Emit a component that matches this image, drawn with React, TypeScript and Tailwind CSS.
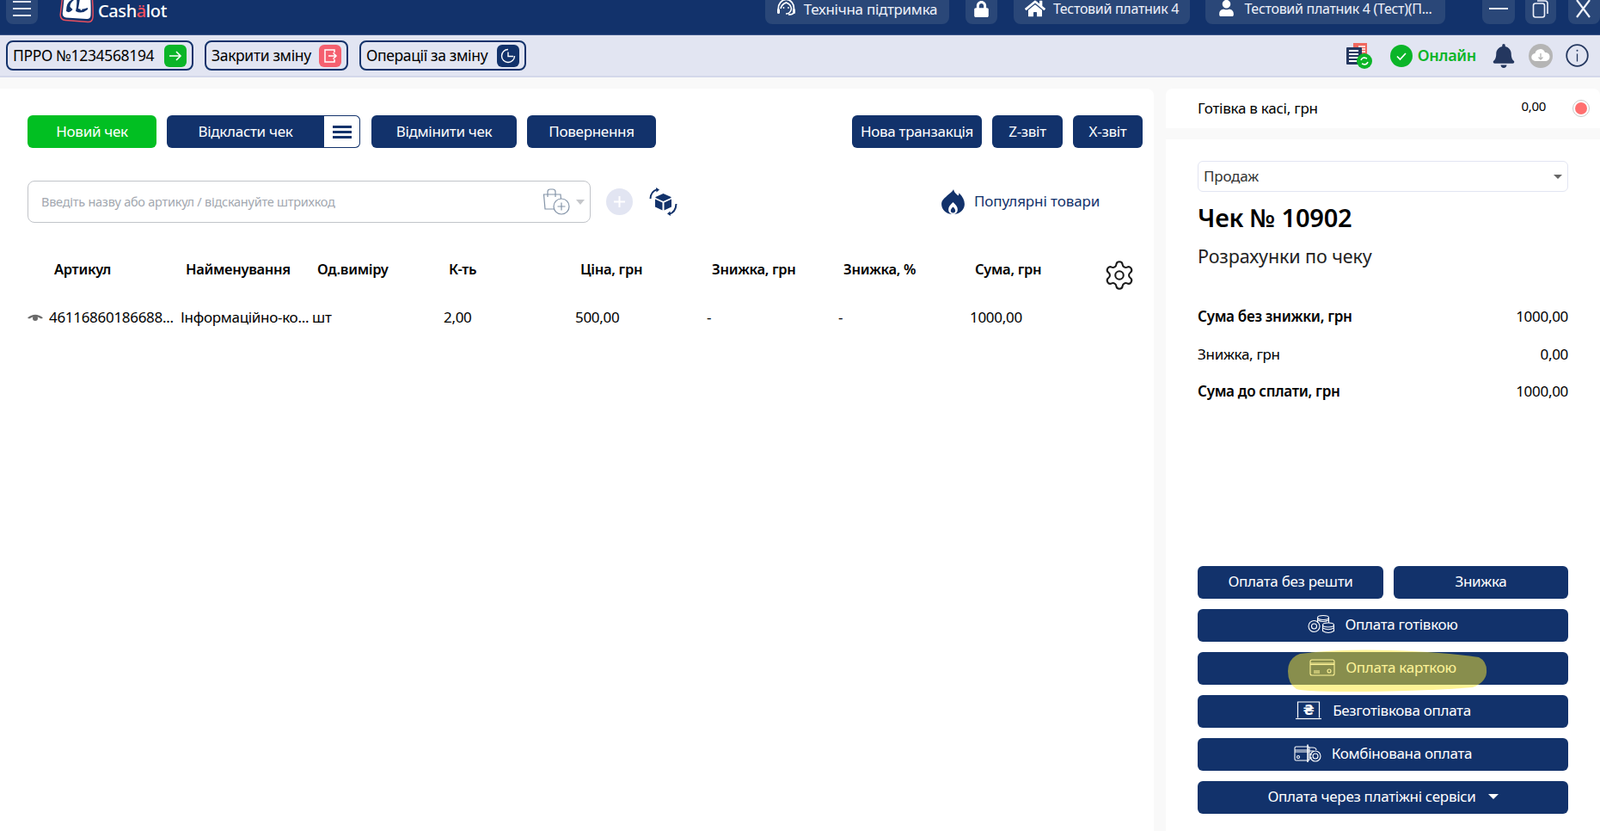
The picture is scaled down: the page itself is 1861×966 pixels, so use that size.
import React from "react";
import { FaBell, FaHome, FaLock, FaUser } from "react-icons/fa";
import { Settings } from "lucide-react";

const Logo = () => (
  <svg width="42" height="28" viewBox="0 0 42 28" className="shrink-0">
    <path d="M4 -6 L38 -6 Q39.500 10 39 20 Q38.500 26 33 25.500 L7 23.500 Q1 23 1.200 17 Z" fill="#12326b" stroke="#e8505f" strokeWidth="1.500" />
    <path d="M6 -6 L36 -6 Q37 8 36.500 18 Q36 22.500 31.500 22 L8 20.500 Q3.500 20 3.800 15.500 Z" fill="#fff" />
    <path d="M8 13 Q8 3 14 0 L17 0 Q12 4 12.500 8 L15.500 11 Q12 16 8 13Z" fill="#12326b" />
    <path d="M20 -2 L24 -2 Q23 5 22 10 Q26 12 33 9 L33 11 Q26 17 19 13 Q21 5 20 -2Z" fill="#12326b" />
    <circle cx="25.500" cy="11" r="1" fill="#fff" />
  </svg>
);

const Support = () => (
  <svg width="24" height="24" viewBox="0 0 24 24" fill="none" stroke="#fff" strokeWidth="1.700" className="shrink-0">
    <path d="M3.500 15 C2 6 8 1.500 12.500 1.500 C17 1.500 23 6 21 15" />
    <path d="M6 12 C7 7 10 6 12.500 5 C15 6 18 8 18.500 12 C18 16 15 18 12 18" />
    <rect x="2" y="12" width="3" height="6" rx="1.500" fill="#fff" stroke="none" />
    <rect x="20" y="12" width="3" height="6" rx="1.500" fill="#fff" stroke="none" />
    <path d="M21 17 Q20 19 15 19" />
    <circle cx="9.500" cy="11" r="0.900" fill="#fff" stroke="none" />
    <circle cx="15" cy="11" r="0.900" fill="#fff" stroke="none" />
  </svg>
);

const Chip = ({ className, children }: { className: string; children?: React.ReactNode }) => (
  <div className={`h-7 rounded-b-lg bg-[#2a4778] flex items-center justify-center shrink-0 overflow-hidden ${className}`}>{children}</div>
);

const ToolButton = ({ label, tile, children, className }: { label: string; tile: string; children: React.ReactNode; className: string }) => (
  <div className={`h-[35px] rounded-lg border-2 border-[#12326b] flex items-center justify-between pl-[6px] pr-[6px] shrink-0 ${className}`}>
    <span className="text-[17.5px] leading-none text-black whitespace-nowrap tracking-[-0.35px] mt-[1px]">{label}</span>
    <span className={`w-[26px] h-[26px] rounded-md flex items-center justify-center ${tile}`}>{children}</span>
  </div>
);

const ActionButton = ({ className, children }: { className: string; children: React.ReactNode }) => (
  <div className={`h-[38px] rounded-md text-white text-[17px] tracking-[-0.3px] flex items-center justify-center whitespace-nowrap shrink-0 ${className}`}>
    {children}
  </div>
);

const cols = ["Артикул", "Найменування", "Од.виміру", "К-ть", "Ціна, грн", "Знижка, грн", "Знижка, %", "Сума, грн"];
const vals = ["46116860186688...", "Інформаційно-ко...", "шт", "2,00", "500,00", "-", "-", "1000,00"];

const Coins = () => (
  <svg width="32" height="24" viewBox="0 0 32 24" fill="none" stroke="#fff" strokeWidth="1.100">
    <circle cx="7.500" cy="14" r="6.500" /><circle cx="7.500" cy="14" r="3" />
    <ellipse cx="18" cy="4" rx="6.500" ry="2.500" /><path d="M11.500 4v6M24.500 4v6M12 7q6 3 12 0" />
    <ellipse cx="24" cy="12.500" rx="6.500" ry="2.500" /><path d="M17.500 12.500v7q6.500 4 13 0v-7M17.500 16q6.500 3.500 13 0" />
  </svg>
);
const CardIcon = () => (
  <svg width="30" height="20" viewBox="0 0 30 20" fill="none" stroke="#fff" strokeWidth="1.100">
    <rect x="1" y="1" width="28" height="18" rx="2" /><path d="M1 6.500h28" /><path d="M1 5h28" />
    <path d="M5 14h7M5 16h7" /><circle cx="23" cy="14" r="2" />
  </svg>
);
const Laptop = () => (
  <svg width="32" height="22" viewBox="0 0 32 22" fill="none" stroke="#fff" strokeWidth="1.200">
    <path d="M3.500 19.500 V1 H28.500 V19.500" /><path d="M1 20.500H31" />
    <text x="16" y="16" textAnchor="middle" fontSize="15" fontWeight="700" fill="#fff" stroke="none" fontFamily="'DejaVu Sans', sans-serif">₴</text>
  </svg>
);
const Combo = () => (
  <svg width="32" height="22" viewBox="0 0 32 22" fill="none" stroke="#fff" strokeWidth="1.100">
    <rect x="1" y="3" width="17" height="16" rx="1.500" /><path d="M1 7h17M1 9h17" /><circle cx="5" cy="15" r="1.500" />
    <path d="M16 0.500V21" strokeWidth="1.600" />
    <path d="M18 4h4q4 0 4 3M18 8h5M18 12h3M18 16h3" /><circle cx="25" cy="14" r="6" /><circle cx="25" cy="14" r="3" />
  </svg>
);

export default function App() {
  return (
    <div className="w-[1861px] h-[966px] overflow-hidden relative flex flex-col bg-[#f9f9f9] font-['Noto_Sans',sans-serif] text-black">
      {/* top bar */}
      <header className="h-[41px] bg-[#12326b] border-b border-[#3a5488] flex items-start pl-[7px] shrink-0 overflow-hidden">
        <Chip className="w-[37px] flex-col gap-[6px] justify-start pt-[1px]">
          <span className="w-[21px] h-[2px] bg-[#dfe3ee] block" />
          <span className="w-[21px] h-[2px] bg-[#dfe3ee] block" />
          <span className="w-[21px] h-[2px] bg-[#dfe3ee] block" />
        </Chip>
        <div className="ml-[25px]"><Logo /></div>
        <div className="ml-[3px] text-[20px] leading-[25px] font-medium text-white font-['Inter',sans-serif] tracking-[-0.4px]">
          Cash<span className="text-[#f0505f]">ä</span>lot
        </div>
        <div className="ml-auto flex">
          <Chip className="w-[214px] gap-[9px] pb-[8px] pr-[2px]">
            <Support />
            <span className="text-[17px] leading-none text-[#eef1fa] tracking-[-0.27px] whitespace-nowrap">Технічна підтримка</span>
          </Chip>
          <Chip className="w-[37px] ml-[19px] pb-[8px]"><FaLock className="text-white text-[19px]" /></Chip>
          <Chip className="w-[205px] ml-[19px] gap-[9px] pb-[9px]">
            <FaHome className="text-white text-[24px]" />
            <span className="text-[16px] leading-none text-[#eef1fa] tracking-[-0.3px] whitespace-nowrap">Тестовий платник 4</span>
          </Chip>
          <Chip className="w-[279px] ml-[18px] gap-[11px] pb-[9px]">
            <FaUser className="text-white text-[19px]" />
            <span className="text-[16px] leading-none text-[#eef1fa] tracking-[-0.3px] whitespace-nowrap">Тестовий платник 4 (Тест)(П...</span>
          </Chip>
          <Chip className="w-[38px] ml-[43px] pb-[9px]"><span className="w-[22px] h-[2px] bg-[#eef1fa] block" /></Chip>
          <Chip className="w-[36px] ml-[12px] pb-[8px]">
            <svg width="20" height="24" viewBox="0 0 20 24" fill="none" stroke="#eef1fa" strokeWidth="1.600">
              <rect x="1.500" y="6" width="13" height="16" rx="2.500" />
              <path d="M6 3h9q3 0 3 3v12" />
            </svg>
          </Chip>
          <Chip className="w-[37px] ml-[14px] justify-start pl-[6px] pb-[8px]">
            <svg width="24" height="24" viewBox="0 0 24 24" stroke="#eef1fa" strokeWidth="2.200"><path d="M4 2l15 20M19 2L4 22" /></svg>
          </Chip>
        </div>
      </header>

      {/* toolbar */}
      <div className="h-[49px] bg-[#e2e5f2] border-b-2 border-[#d3d8ea] flex items-center pl-[7px] pr-[13px] shrink-0">
        <ToolButton label="ПРРО №1234568194" tile="bg-[#0bb528]" className="w-[218px]">
          <svg width="18" height="18" viewBox="0 0 18 18" fill="none" stroke="#fff" strokeWidth="1.600"><path d="M2 9h13M10 4l5 5-5 5" /></svg>
        </ToolButton>
        <ToolButton label="Закрити зміну" tile="bg-[#f5606f]" className="w-[167px] ml-[13px]">
          <svg width="20" height="20" viewBox="0 0 20 20" fill="none" stroke="#fff" strokeWidth="1.500"><path d="M15 6V3H4v14h11v-3M8 10h9M13.500 6.500L17 10l-3.500 3.500" /></svg>
        </ToolButton>
        <ToolButton label="Операції за зміну" tile="bg-[#12326b]" className="w-[194px] ml-[13px]">
          <svg width="20" height="20" viewBox="0 0 20 20" fill="none" stroke="#fff" strokeWidth="1.400"><path d="M10 2.500a7.500 7.500 0 1 0 7.500 7.500M10 5.500V10.500H16" /></svg>
        </ToolButton>
        <div className="ml-auto flex items-center">
          <svg width="32" height="30" viewBox="0 0 32 30">
            <rect x="9" y="0" width="16" height="16" fill="#f0685f" />
            <path d="M15 4h8M15 7h8M15 10h8" stroke="#fff" strokeWidth="1.500" />
            <rect x="1" y="5" width="18" height="20" rx="1" fill="#24375f" />
            <path d="M4 9h11M4 13h11M4 17h11M4 21h11" stroke="#fff" strokeWidth="2" />
            <circle cx="22" cy="21" r="9" fill="#0bb528" />
            <path d="M18 20q1-3 4-3l3 1M26 22q-1 3-4 3l-3-1" stroke="#fff" strokeWidth="1.500" fill="none" />
          </svg>
          <svg width="26" height="26" viewBox="0 0 26 26" className="ml-[20px]">
            <circle cx="13" cy="13" r="13" fill="#0bb528" />
            <path d="M8 13.500l3.500 3.500 6.500-7" stroke="#fff" strokeWidth="1.700" fill="none" />
          </svg>
          <span className="ml-[6px] -mt-[2px] text-[18px] font-semibold text-[#0bb528] leading-none tracking-[-0.3px]">Онлайн</span>
          <FaBell className="ml-[18px] text-[#24375f] text-[28px]" />
          <svg width="28" height="28" viewBox="0 0 28 28" className="ml-[15px]">
            <circle cx="14" cy="14" r="14" fill="#b5b5b5" />
            <path d="M8 20a4.500 4.500 0 0 1-.500-9 6 6 0 0 1 11.500-1 5 5 0 0 1 1 10Z" fill="#fff" />
            <path d="M14 11v7M11.500 15.500L14 18l2.500-2.500" stroke="#b5b5b5" strokeWidth="1.300" fill="none" />
          </svg>
          <svg width="27" height="27" viewBox="0 0 27 27" fill="none" className="ml-[15px]">
            <circle cx="13.500" cy="13.500" r="12.300" stroke="#24375f" strokeWidth="1.800" />
            <path d="M13.500 11.500v9" stroke="#24375f" strokeWidth="1.300" />
            <circle cx="13.500" cy="7.800" r="1" fill="#24375f" />
          </svg>
        </div>
      </div>

      {/* body */}
      <div className="flex-1 flex pt-[13px] min-h-0">
        <main className="w-[1342px] bg-white rounded-tr-lg pt-[31px] pl-[32px] pr-[13px] shrink-0">
          <div className="flex">
            <ActionButton className="w-[150px] bg-[#01bf22]">Новий чек</ActionButton>
            <div className="ml-[12px] w-[225px] h-[38px] rounded-md bg-[#12326b] text-white text-[17px] tracking-[-0.3px] flex items-center overflow-hidden shrink-0">
              <span className="w-[183px] text-center">Відкласти чек</span>
              <span className="w-[42px] h-full bg-white border border-l-0 border-[#12326b] rounded-r-md flex flex-col items-center justify-center gap-[3px]">
                <i className="w-[22px] h-[3px] bg-[#12326b] block" />
                <i className="w-[22px] h-[3px] bg-[#12326b] block" />
                <i className="w-[22px] h-[3px] bg-[#12326b] block" />
              </span>
            </div>
            <ActionButton className="w-[169px] ml-[13px] bg-[#12326b]">Відмінити чек</ActionButton>
            <ActionButton className="w-[150px] ml-[12px] bg-[#12326b]">Повернення</ActionButton>
            <ActionButton className="w-[151px] ml-auto bg-[#12326b]">Нова транзакція</ActionButton>
            <ActionButton className="w-[82px] ml-[12px] bg-[#12326b]">Z-звіт</ActionButton>
            <ActionButton className="w-[81px] ml-[12px] bg-[#12326b]">X-звіт</ActionButton>
          </div>

          <div className="flex items-center mt-[38px] h-[49px]">
            <div className="w-[655px] h-full border border-[#c1c4c9] rounded-lg flex items-center pl-[15px] pr-[6px]">
              <span className="text-[14.5px] text-[#a3a8b0] tracking-[-0.25px] whitespace-nowrap">Введіть назву або артикул / відскануйте штрихкод</span>
              <svg width="34" height="32" viewBox="0 0 34 32" fill="none" stroke="#8494a8" strokeWidth="1.200" className="ml-auto">
                <path d="M14 24H3L1.500 7H21l.500 6" /><path d="M6 10V4q0-3 3-3h3q3 0 3 3v6" />
                <circle cx="22" cy="21" r="9" fill="#fff" /><path d="M22 16.500v9M17.500 21h9" />
              </svg>
              <span className="ml-[5px] w-0 h-0 border-x-[5px] border-x-transparent border-t-[6px] border-t-[#c5c7cb]" />
            </div>
            <span className="ml-[18px] w-[31px] h-[31px] rounded-full bg-[#e2e5f2] flex items-center justify-center">
              <svg width="13" height="13" viewBox="0 0 13 13" stroke="#fff" strokeWidth="2"><path d="M6.500 0v13M0 6.500h13" /></svg>
            </span>
            <svg width="33" height="33" viewBox="0 0 33 33" className="ml-[19px]">
              <path d="M16.500 7l9 4v1l-9 4-9-4v-1Z" fill="#12326b" />
              <path d="M7 13.500l8.500 4v9l-8.500-4ZM26 13.500l-8.500 4v9l8.500-4Z" fill="#12326b" />
              <path d="M1.500 13Q2 4 10 2M31.500 19Q31 29 23 31" stroke="#12326b" strokeWidth="2" fill="none" />
              <path d="M8 0l4 2.500L8.500 5.500ZM25 33l-4-2.500 3.500-3Z" fill="#12326b" />
            </svg>
            <svg width="27" height="29" viewBox="0 0 25 27" className="ml-[307px]">
              <path d="M13 0c1 4 3 5 5 7 .8-1 1-1.500 1-3 4 4 6 8 6 12 0 6-5 11-12.500 11S0 22 0 16c0-4 3-6 6-9 3-3 6-4 7-7Z" fill="#12326b" />
              <path d="M12.500 14c3 3 5 5 5 8a5 5 0 0 1-10 0c0-3 2-5 5-8Z" fill="#fff" />
              <path d="M12.500 19c1.500 1.500 2.500 2.500 2.500 4a2.500 2.500 0 0 1-5 0c0-1.500 1-2.500 2.500-4Z" fill="#12326b" />
            </svg>
            <span className="ml-[11px] -mt-[2px] text-[17px] text-[#12326b] tracking-[-0.1px] whitespace-nowrap">Популярні товари</span>
          </div>

          <div className="grid grid-cols-[repeat(8,153px)] items-center mt-[33px] h-[42px] pl-[25px] relative">
            {cols.map((c) => (
              <span key={c} className="pl-[6px] text-[16.5px] font-semibold tracking-[-0.3px] whitespace-nowrap">{c}</span>
            ))}
            <Settings className="absolute right-[8px] top-[9px] w-[38px] h-[38px] text-[#1a1a1a]" strokeWidth={1.3} />
          </div>
          <div className="flex items-center mt-[21px] h-[28px]">
            <svg width="18" height="10" viewBox="0 0 18 10" className="shrink-0 mr-[7px]">
              <path d="M0 5.500Q9-2 18 5.500L16 6.500Q9 1.500 2 6.500Z" fill="#6a6a6a" />
              <circle cx="9" cy="6" r="3" fill="#6a6a6a" />
            </svg>
            <div className="grid grid-cols-[repeat(8,153px)] items-center">
              {vals.map((v, i) => (
                <span key={i} className="text-[17px] tracking-[-0.3px] whitespace-nowrap">{v}</span>
              ))}
            </div>
          </div>
        </main>

        <aside className="w-[505px] ml-[14px] flex flex-col shrink-0">
          <div className="h-[46px] bg-white rounded-t-lg flex items-center pl-[37px] pr-[12px] shrink-0">
            <span className="text-[17px] tracking-[-0.25px]">Готівка в касі, грн</span>
            <span className="ml-auto text-[15px] tracking-[-0.3px] -mt-[6px]">0,00</span>
            <span className="ml-[31px] w-[20px] h-[20px] rounded-full border border-[#c8c8c8] flex items-center justify-center">
              <i className="w-[14px] h-[14px] rounded-full bg-[#ff6f6f] block" />
            </span>
          </div>
          <div className="flex-1 mt-[13px] bg-white px-[37px] pt-[25px] pb-[20px] flex flex-col min-h-0">
            <div className="h-9 border border-[#e2e5f2] rounded-md flex items-center pl-[6px] pr-[6px] shrink-0">
              <span className="text-[17px] text-[#333] tracking-[-0.2px]">Продаж</span>
              <span className="ml-auto w-0 h-0 border-x-[5px] border-x-transparent border-t-[5px] border-t-[#666]" />
            </div>
            <div className="text-[29px] leading-[36px] font-semibold mt-[12px] tracking-[-0.2px]">Чек № 10902</div>
            <div className="text-[21.5px] leading-[28px] mt-[13px] tracking-[-0.1px] text-[#222]">Розрахунки по чеку</div>
            <div className="flex justify-between items-center h-6 mt-[44px] text-[17px] tracking-[-0.3px]"><span className="font-semibold">Сума без знижки, грн</span><span>1000,00</span></div>
            <div className="flex justify-between items-center h-6 mt-[20px] text-[17px] tracking-[-0.3px]"><span>Знижка, грн</span><span>0,00</span></div>
            <div className="flex justify-between items-center h-6 mt-[19px] text-[17px] tracking-[-0.3px]"><span className="font-semibold">Сума до сплати, грн</span><span>1000,00</span></div>

            <div className="mt-auto flex flex-col gap-[12px]">
              <div className="flex gap-[12px]">
                <ActionButton className="w-[216px] pb-[2px] bg-[#12326b]">Оплата без решти</ActionButton>
                <ActionButton className="w-[203px] pb-[2px] bg-[#12326b]">Знижка</ActionButton>
              </div>
              <ActionButton className="w-full gap-[11px] pb-[2px] bg-[#12326b]"><Coins />Оплата готівкою</ActionButton>
              <ActionButton className="w-full gap-[12px] pb-[2px] bg-[#12326b]"><CardIcon />Оплата карткою</ActionButton>
              <ActionButton className="w-full gap-[12px] pb-[2px] bg-[#12326b]"><Laptop />Безготівкова оплата</ActionButton>
              <ActionButton className="w-full gap-[12px] pb-[2px] bg-[#12326b]"><Combo />Комбінована оплата</ActionButton>
              <ActionButton className="w-full gap-[14px] pb-[2px] bg-[#12326b]">
                Оплата через платіжні сервіси
                <span className="w-0 h-0 border-x-[6px] border-x-transparent border-t-[6px] border-t-white" />
              </ActionButton>
            </div>
          </div>
        </aside>
      </div>

      {/* highlighter stroke laid over the card button */}
      <svg width="232" height="50" viewBox="0 0 232 50" className="absolute left-[1498px] top-[755px] pointer-events-none">
        <path d="M0 25 Q0 10 14 5 Q60 -1 120 1 Q180 3 222 9 Q232 14 231 27 Q230 38 215 44 Q150 49 70 49 Q20 49 10 46 Q0 40 0 25Z" fill="#fbe832" fillOpacity="0.51" />
      </svg>
    </div>
  );
}
